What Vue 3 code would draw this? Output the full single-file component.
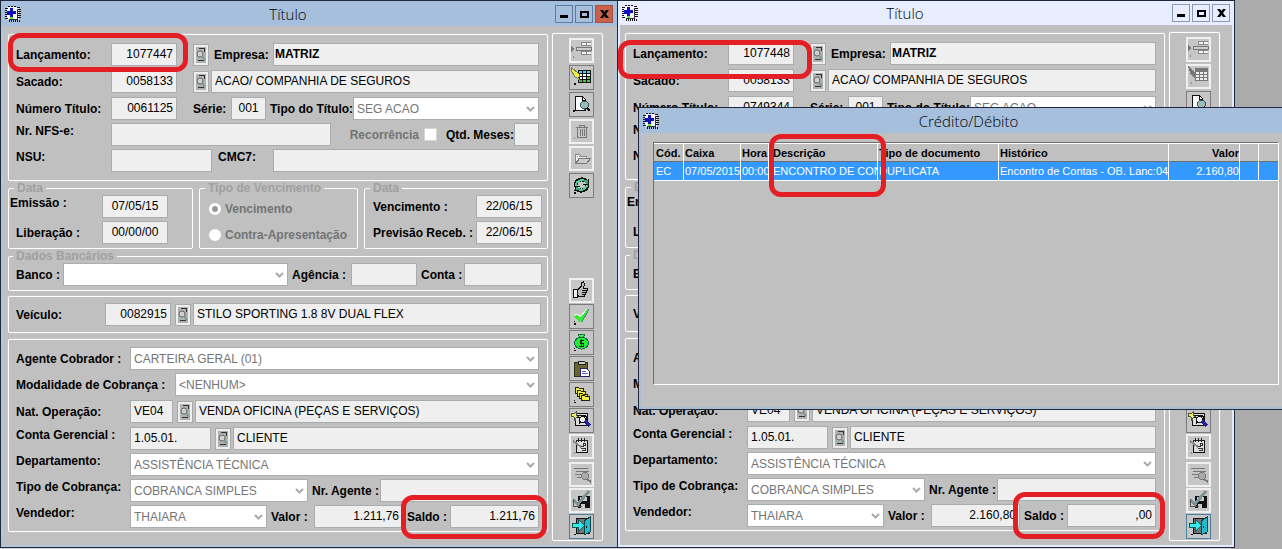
<script setup>
const windows = [
  { id: 'a', theme: 'blue', lancamento: '1077447', numero: '0061125', valor: '1.211,76', saldo: '1.211,76', editable: true },
  { id: 'b', theme: 'pale', lancamento: '1077448', numero: '0749344', valor: '2.160,80', saldo: ',00', editable: false },
]

const icons = {
  insert: '<path d="M2 8l4 3-4 3z" fill="#777"/><path d="M12 4h10v4h-10zM12 12h10v4h-10z" fill="#f4f4f4"/><path d="M12 4h10M12 7h10M12 13h10M12 16h10M12 4v4M17 4v4M17 13v3M12 13v3" stroke="#888" fill="none"/><rect x="7.500" y="9.500" width="15" height="3" fill="#ccc" stroke="#777"/><path d="M4 18h1v2h-1z" fill="#888"/>',
  edit: '<rect x="9" y="5" width="13" height="13" fill="#111"/><path d="M10 6h3v2h-3zM14 6h3v2h-3zM18 6h3v2h-3z" fill="#5cf"/><path d="M10 9h3v2h-3zM14 9h3v2h-3zM18 9h3v2h-3zM10 12h3v2h-3zM14 12h3v2h-3z" fill="#fff"/><path d="M18 12h3v2h-3zM10 15h3v2h-3zM14 15h3v2h-3zM18 15h3v2h-3z" fill="#4c4"/><path d="M2 2l8 7 1 6-5-3-4-7z" fill="#ee4" stroke="#776"/><path d="M8 12l3 3v-3z" fill="#111"/><rect x="5" y="18" width="2" height="2" fill="#111"/>',
  editOff: '<rect x="9" y="4" width="13" height="13" fill="#777"/><path d="M10 8h3v2h-3zM14 8h3v2h-3zM18 8h3v2h-3zM10 11h3v2h-3zM14 11h3v2h-3zM18 11h3v2h-3zM10 14h3v2h-3zM14 14h3v2h-3zM18 14h3v2h-3z" fill="#eee"/><path d="M2 2l7 7 1 6-5-4z" fill="#777"/><rect x="5" y="18" width="1" height="2" fill="#888"/>',
  preview: '<path d="M6.500 4.500h7l3 3v11h-10z" fill="#fff" stroke="#111"/><path d="M13.500 4.500v4h3" fill="none" stroke="#111"/><circle cx="15.500" cy="13" r="4" fill="#9bb" stroke="#355"/><path d="M18 16l3 3" stroke="#111" stroke-width="2"/><path d="M4 18h2v2h-2z" fill="#111"/>',
  trash: '<path d="M7 8.500h12M10.500 8v-2h5v2M8.500 9v9.500h9v-9.500M11.500 10v7M13.500 10v7M15.500 10v7" fill="none" stroke="#777"/><path d="M5 18h1v2h-1z" fill="#999"/>',
  folder: '<path d="M6.500 17v-9h4l1 2h6v3" fill="#eee" stroke="#888"/><path d="M6.500 17.500l4-5h11l-4 5z" fill="#ccc" stroke="#777"/><path d="M8 10h1v1h-1zM10 10h1v1h-1zM9 12h1v1h-1z" fill="#999"/>',
  refresh: '<path d="M7 13a6 5 0 0 1 10-5M18 11a6 5 0 0 1-10 5" fill="none" stroke="#111" stroke-width="4"/><path d="M7 13a6 5 0 0 1 9-5M18 11a6 5 0 0 1-9 5" fill="none" stroke="#5c9" stroke-width="2"/><path d="M14 7h5v4h-2zM11 17h-5v-4h2z" fill="#3a7"/><path d="M19 6v5h-5M6 18v-5h5" stroke="#111" fill="none"/><path d="M5 17h1v1h-1zM5 19h2v2h-2z" fill="#111"/>',
  thumb: '<path d="M4.500 11.500h4v8h-4z" fill="#eee" stroke="#111"/><path d="M8.500 12l4-4v-3l2-1 1 2-1 4h4v2.500h-1v2h-1v2h-1v2h-5l-2-1z" fill="#bbb" stroke="#111"/><path d="M13 12.500h5M13 14.500h4M13 16.500h3" stroke="#111"/>',
  check: '<path d="M5 12l4-1 2 3 7-9h2l-7 13h-3z" fill="#3e3"/><path d="M13 18l7-13" stroke="#588" fill="none"/><path d="M5 11l4-1 2 3 7-8" stroke="#eee" fill="none"/><path d="M5 17h1v1h-1zM5 19h2v2h-2z" fill="#111"/>',
  money: '<path d="M9.500 4.500h6l-1 3h-4z" fill="#4e4" stroke="#264"/><ellipse cx="12.500" cy="13" rx="7" ry="6" fill="#2e3" stroke="#164"/><path d="M15 10h-4v3h3v3h-4M12.500 9v8" stroke="#121" fill="none"/><path d="M5 18h1v1h-1zM5 20h2v1h-2z" fill="#111"/>',
  paste: '<path d="M5.500 6.500h13v14h-13z" fill="#663" stroke="#331"/><path d="M9 8v-2l2-1h3l2 1v2z" fill="#ccb" stroke="#222"/><path d="M11.500 12.500h6l3 3v5h-9z" fill="#fff" stroke="#226"/><path d="M13 15h4M13 17.500h6" stroke="#55b"/>',
  layers: '<g fill="#ee4" stroke="#221"><path d="M6.500 5.500h3l1 1h4v5h-8z"/><path d="M8.500 8.500h3l1 1h4v5h-8z"/><path d="M10.500 11.500h3l1 1h4v4h-8z"/><path d="M12.500 13.500h3l1 1h4v4h-8z"/></g><path d="M5 18h1v1h-1zM5 20h2v1h-2z" fill="#111"/>',
  inspect: '<path d="M6.500 5.500h12v12h-12z" fill="#ddd" stroke="#111"/><path d="M3 5l2 1 2-2v3l3 1-3 2-1 3-1-4-3-1z" fill="#ee6" stroke="#554"/><path d="M8 7h9M8 9h2v7M14 8h3v8" stroke="#111" fill="none"/><circle cx="13.500" cy="11.500" r="3" fill="#eee" stroke="#111"/><path d="M16 13l5 5" stroke="#229" stroke-width="3"/>',
  note: '<path d="M7.500 6.500h11v12h-11z" fill="#ddd" stroke="#111"/><path d="M7 6.500h12M9 4v4M12 4v4M15 4v4" stroke="#222"/><path d="M14 9h2v2h-2zM12 12h3M12 14h4v2h-3" stroke="#333" fill="none"/><path d="M4 7l8 6" stroke="#888" stroke-width="2"/><path d="M5 18h1v2h-1z" fill="#888"/>',
  search: '<path d="M5 6.500h14M7 9.500h13M6 12.500h10M8 15.500h7" stroke="#777"/><circle cx="16" cy="14" r="3.500" fill="#aaa" stroke="#777"/><path d="M18 17l4 3" stroke="#777" stroke-width="2"/>',
  save: '<path d="M9 8h12v12h-12z" fill="#111"/><path d="M11 9h7v4h-7zM12 16h6v4h-6z" fill="#ccc"/><path d="M16 16h2v4h-2z" fill="#111"/><path d="M4 12l5 4 11-13" fill="none" stroke="#7a9494" stroke-width="3"/><path d="M4.500 11v7h8" stroke="#555" fill="none"/>',
  exit: '<path d="M7.500 4.500h13v15h-13z" fill="#777" stroke="#111"/><path d="M15 7l6-4v15l-6 3z" fill="#2bc" stroke="#144"/><path d="M3.500 9.500h6v-4l6 6-6 6v-4h-6z" fill="#3ee" stroke="#155"/><path d="M17 12h1v2h-1z" fill="#111"/><path d="M5 20h2v1h-2z" fill="#111"/>',
}

const topTools = (w) => [
  { icon: 'insert', label: 'Incluir', off: true },
  { icon: w.editable ? 'edit' : 'editOff', label: 'Alterar', off: !w.editable },
  { icon: 'preview', label: 'Visualizar' },
  { icon: 'trash', label: 'Excluir', off: true },
  { icon: 'folder', label: 'Abrir', off: true },
  { icon: 'refresh', label: 'Atualizar' },
]
const midTools = [
  { icon: 'thumb', label: 'Aprovar', off: true },
  { icon: 'check', label: 'Confirmar' },
  { icon: 'money', label: 'Baixar' },
  { icon: 'paste', label: 'Colar' },
  { icon: 'layers', label: 'Parcelas' },
  { icon: 'inspect', label: 'Consultar' },
  { icon: 'note', label: 'Anotar', off: true },
]
const endTools = [
  { icon: 'search', label: 'Localizar', off: true },
  { icon: 'save', label: 'Gravar', off: true },
  { icon: 'exit', label: 'Sair', focus: true },
]

const appIcon = '<path d="M2 1h12v13h-12z" fill="#f4f4fa"/><path d="M0 2h3v1h-3zM0 4h2v1h-2zM0 6h2v1h-2zM0 8h2v1h-2zM0 10h2v1h-2zM0 12h3v1h-3zM3 0h2v1h-2zM6 0h2v1h-2zM9 0h2v1h-2zM12 1h3v1h-3zM13 3h3v1h-3zM13 5h3v1h-3zM13 7h3v1h-3zM13 9h3v1h-3zM13 11h3v1h-3zM4 14h1v2h-1zM6 14h1v2h-1zM8 14h1v2h-1zM10 14h1v2h-1zM12 14h1v2h-1zM14 14h1v2h-1z" fill="#111"/><path d="M4 13h9v1h-9zM12 3h1v10h-1z" fill="#333"/><path d="M5 2h3v3h3v3h-3v3h-3v-2h-3v-4h3z" fill="#11b"/><path d="M5 11h3v2h-3z" fill="#5e3"/>'
const lookupIcon = '<rect x="2" y="2" width="10" height="16" fill="#b0b0b0"/><circle cx="6" cy="9" r="3" fill="#d0d0d0" stroke="#666"/><path d="M5 3.500h6M10.500 3v4M4 15.500h6" stroke="#333" fill="none"/><path d="M8 11l3 4" stroke="#7a9a90" stroke-width="2"/>'
</script>

<template>
  <div class="desktop">
    <section v-for="w in windows" :key="w.id" class="window" :class="w.theme">
      <header class="titlebar">
        <svg class="app-icon" viewBox="0 0 16 16" shape-rendering="crispEdges" v-html="appIcon"></svg>
        <h1>Título</h1>
        <div class="win-buttons">
          <button type="button" aria-label="Minimizar"><svg viewBox="0 0 16 16"><path d="M4 9h8v3h-8z" /></svg></button>
          <button type="button" aria-label="Maximizar"><svg viewBox="0 0 16 16"><path d="M4 5h9v7h-9zM6 7v3h5v-3z" fill-rule="evenodd" /></svg></button>
          <button type="button" class="close" aria-label="Fechar"><svg viewBox="0 0 16 16"><path d="M4 4h3l1.500 2L10 4h3L10 8l3 4h-3L8.500 10 7 12H4l3-4z" /></svg></button>
        </div>
      </header>

      <div class="body">
        <form class="main" @submit.prevent>
          <div class="panel panel-title">
            <div class="row">
              <label class="w95" :for="w.id + 'lan'">Lançamento:</label>
              <input :id="w.id + 'lan'" class="num w66" :value="w.lancamento" />
              <button type="button" class="lookup far" aria-label="Procurar lançamento"><svg viewBox="0 0 14 20" v-html="lookupIcon"></svg></button>
              <label class="w59 after" :for="w.id + 'emp'">Empresa:</label>
              <input :id="w.id + 'emp'" class="grow strong" value="MATRIZ" />
            </div>
            <div class="row gap4">
              <label class="w95" :for="w.id + 'sac'">Sacado:</label>
              <input :id="w.id + 'sac'" class="num w66" value="0058133" />
              <button type="button" class="lookup far" aria-label="Procurar sacado"><svg viewBox="0 0 14 20" v-html="lookupIcon"></svg></button>
              <input class="grow" aria-label="Nome do sacado" value="ACAO/ COMPANHIA DE SEGUROS" />
            </div>
            <div class="row gap4">
              <label class="w95" :for="w.id + 'num'">Número Título:</label>
              <input :id="w.id + 'num'" class="num w66" :value="w.numero" />
              <label class="w38 serie" :for="w.id + 'ser'">Série:</label>
              <input :id="w.id + 'ser'" class="mid w35" value="001" />
              <label class="w83 near" :for="w.id + 'tip'">Tipo do Título:</label>
              <span class="combo grow">
                <select :id="w.id + 'tip'"><option>SEG ACAO</option></select>
                <svg viewBox="0 0 9 6"><path d="M1 1l3.500 3.500L8 1" /></svg>
              </span>
            </div>
            <div class="row">
              <label class="w95 high" :for="w.id + 'nfs'">Nr. NFS-e:</label>
              <input :id="w.id + 'nfs'" class="grow" />
              <label class="dim recor" :for="w.id + 'rec'">Recorrência</label>
              <input :id="w.id + 'rec'" type="checkbox" />
              <label class="w68" :for="w.id + 'qtd'">Qtd. Meses:</label>
              <input :id="w.id + 'qtd'" class="w25" />
            </div>
            <div class="row">
              <label class="w95 high" :for="w.id + 'nsu'">NSU:</label>
              <input :id="w.id + 'nsu'" class="w101" />
              <label class="w55 cmc high" :for="w.id + 'cmc'">CMC7:</label>
              <input :id="w.id + 'cmc'" class="grow" />
            </div>
          </div>

          <div class="dates">
            <fieldset class="issue">
              <legend>Data</legend>
              <div class="row">
                <label class="high" :for="w.id + 'emi'">Emissão :</label>
                <input :id="w.id + 'emi'" class="mid w66" value="07/05/15" />
              </div>
              <div class="row">
                <label class="inset" :for="w.id + 'lib'">Liberação :</label>
                <input :id="w.id + 'lib'" class="mid w66" value="00/00/00" />
              </div>
            </fieldset>
            <fieldset class="kinds">
              <legend>Tipo de Vencimento</legend>
              <div class="row">
                <input :id="w.id + 'r1'" type="radio" :name="w.id + 'kind'" checked />
                <label class="dim" :for="w.id + 'r1'">Vencimento</label>
              </div>
              <div class="row">
                <input :id="w.id + 'r2'" type="radio" :name="w.id + 'kind'" />
                <label class="dim" :for="w.id + 'r2'">Contra-Apresentação</label>
              </div>
            </fieldset>
            <fieldset>
              <legend>Data</legend>
              <div class="row">
                <label class="w103" :for="w.id + 'ven'">Vencimento :</label>
                <input :id="w.id + 'ven'" class="mid w66" value="22/06/15" />
              </div>
              <div class="row">
                <label class="w103" :for="w.id + 'pre'">Previsão Receb. :</label>
                <input :id="w.id + 'pre'" class="mid w66" value="22/06/15" />
              </div>
            </fieldset>
          </div>

          <fieldset class="bank">
            <legend>Dados Bancários</legend>
            <div class="row">
              <label class="w47" :for="w.id + 'ban'">Banco :</label>
              <span class="combo grow">
                <select :id="w.id + 'ban'"><option></option></select>
                <svg viewBox="0 0 9 6"><path d="M1 1l3.500 3.500L8 1" /></svg>
              </span>
              <label class="w59 near" :for="w.id + 'age'">Agência :</label>
              <input :id="w.id + 'age'" class="w66" />
              <label class="w43 near" :for="w.id + 'con'">Conta :</label>
              <input :id="w.id + 'con'" class="w78" />
            </div>
          </fieldset>

          <div class="panel vehicle">
            <div class="row">
              <label class="w89" :for="w.id + 'vei'">Veículo:</label>
              <input :id="w.id + 'vei'" class="num w66" value="0082915" />
              <button type="button" class="lookup" aria-label="Procurar veículo"><svg viewBox="0 0 14 20" v-html="lookupIcon"></svg></button>
              <input class="grow" aria-label="Descrição do veículo" value="STILO SPORTING 1.8 8V DUAL FLEX" />
            </div>
          </div>

          <div class="panel billing">
            <div class="row">
              <label class="w114" :for="w.id + 'agc'">Agente Cobrador :</label>
              <span class="combo grow">
                <select :id="w.id + 'agc'"><option>CARTEIRA GERAL (01)</option></select>
                <svg viewBox="0 0 9 6"><path d="M1 1l3.500 3.500L8 1" /></svg>
              </span>
            </div>
            <div class="row">
              <label class="w159" :for="w.id + 'mod'">Modalidade de Cobrança :</label>
              <span class="combo grow">
                <select :id="w.id + 'mod'"><option>&lt;NENHUM&gt;</option></select>
                <svg viewBox="0 0 9 6"><path d="M1 1l3.500 3.500L8 1" /></svg>
              </span>
            </div>
            <div class="row gap4">
              <label class="w114" :for="w.id + 'nat'">Nat. Operação:</label>
              <input :id="w.id + 'nat'" class="w43" value="VE04" />
              <button type="button" class="lookup" aria-label="Procurar natureza"><svg viewBox="0 0 14 20" v-html="lookupIcon"></svg></button>
              <input class="grow" aria-label="Descrição da natureza" value="VENDA OFICINA (PEÇAS E SERVIÇOS)" />
            </div>
            <div class="row gap4">
              <label class="w114 high" :for="w.id + 'ger'">Conta Gerencial :</label>
              <input :id="w.id + 'ger'" class="w81" value="1.05.01." />
              <button type="button" class="lookup" aria-label="Procurar conta"><svg viewBox="0 0 14 20" v-html="lookupIcon"></svg></button>
              <input class="grow" aria-label="Descrição da conta" value="CLIENTE" />
            </div>
            <div class="row">
              <label class="w114 high" :for="w.id + 'dep'">Departamento:</label>
              <span class="combo grow">
                <select :id="w.id + 'dep'"><option>ASSISTÊNCIA TÉCNICA</option></select>
                <svg viewBox="0 0 9 6"><path d="M1 1l3.500 3.500L8 1" /></svg>
              </span>
            </div>
            <div class="row">
              <label class="w114 high" :for="w.id + 'tco'">Tipo de Cobrança:</label>
              <span class="combo grow">
                <select :id="w.id + 'tco'"><option>COBRANCA SIMPLES</option></select>
                <svg viewBox="0 0 9 6"><path d="M1 1l3.500 3.500L8 1" /></svg>
              </span>
              <label class="w68 near" :for="w.id + 'nag'">Nr. Agente :</label>
              <input :id="w.id + 'nag'" class="w159" />
            </div>
            <div class="row">
              <label class="w114 high" :for="w.id + 'vdd'">Vendedor:</label>
              <span class="combo grow">
                <select :id="w.id + 'vdd'"><option>THAIARA</option></select>
                <svg viewBox="0 0 9 6"><path d="M1 1l3.500 3.500L8 1" /></svg>
              </span>
              <label class="w43 near" :for="w.id + 'val'">Valor :</label>
              <input :id="w.id + 'val'" class="num w89" :value="w.valor" />
              <label class="w43 near" :for="w.id + 'sal'">Saldo :</label>
              <input :id="w.id + 'sal'" class="num w89" :value="w.saldo" />
            </div>
          </div>
        </form>

        <nav class="tools" aria-label="Ações">
          <div class="tool-set loose">
            <button v-for="t in topTools(w)" :key="t.icon" type="button" :class="{ off: t.off }" :aria-label="t.label">
              <svg viewBox="0 0 25 25" shape-rendering="crispEdges" v-html="icons[t.icon]"></svg>
            </button>
          </div>
          <div class="tool-set mid-set">
            <button v-for="t in midTools" :key="t.icon" type="button" :class="{ off: t.off }" :aria-label="t.label">
              <svg viewBox="0 0 25 25" shape-rendering="crispEdges" v-html="icons[t.icon]"></svg>
            </button>
          </div>
          <div class="tool-set end-set">
            <button v-for="t in endTools" :key="t.icon" type="button" :class="{ off: t.off, focus: t.focus }" :aria-label="t.label">
              <svg viewBox="0 0 25 25" shape-rendering="crispEdges" v-html="icons[t.icon]"></svg>
            </button>
          </div>
        </nav>
      </div>

      <span class="mark mark-launch"></span>
      <span class="mark mark-balance"></span>
    </section>

    <section class="dialog">
      <header class="titlebar">
        <svg class="app-icon" viewBox="0 0 16 16" shape-rendering="crispEdges" v-html="appIcon"></svg>
        <h1>Crédito/Débito</h1>
      </header>
      <div class="grid-box">
        <table>
          <colgroup>
            <col class="c1" /><col class="c2" /><col class="c3" /><col class="c4" /><col class="c5" /><col /><col class="c7" /><col class="c8" /><col class="c8" />
          </colgroup>
          <thead>
            <tr>
              <th>Cód.</th><th>Caixa</th><th>Hora</th><th>Descrição</th><th>Tipo de documento</th><th>Histórico</th><th class="right">Valor</th><th></th><th></th>
            </tr>
          </thead>
          <tbody>
            <tr>
              <td>EC</td><td>07/05/2015</td><td>00:00</td><td>ENCONTRO DE CONTA</td><td>DUPLICATA</td><td>Encontro de Contas - OB. Lanc:047</td><td class="right">2.160,80</td><td></td><td></td>
            </tr>
          </tbody>
        </table>
      </div>
      <span class="mark mark-column"></span>
    </section>
  </div>
</template>

<style>
body {
  margin: 0;
  background: #d4d4d4;
}
</style>

<style scoped>
.desktop {
  position: relative;
  display: grid;
  grid-template-columns: 617fr 618fr 47fr;
  min-height: 100vh;
  padding-bottom: 1px;
  box-sizing: border-box;
  background: linear-gradient(to right, #d4d4d4 96%, #ababab 96%);
  font: 12px/16px "Liberation Sans", Arial, sans-serif;
  color: #000;
}
.desktop *,
.desktop *::before {
  box-sizing: border-box;
}

/* windows */
.window {
  position: relative;
  display: flex;
  flex-direction: column;
  min-width: 0;
  border: 1px solid #20283a;
  border-right: 0;
  background: #c0c0c0;
}
.window.pale {
  border-right: 1px solid #20283a;
}
.titlebar {
  display: flex;
  align-items: center;
  height: 25px;
  padding: 0 4px;
  background: #a6bfdc;
}
.pale .titlebar {
  height: 24px;
  background: #e8eeff;
}
.titlebar h1 {
  flex: 1;
  margin: 0;
  text-align: center;
  font: 300 15px/20px "Open Sans", "Noto Sans", sans-serif;
}
.app-icon {
  width: 16px;
  height: 16px;
}
.win-buttons {
  display: flex;
  gap: 2px;
}
.win-buttons button {
  display: flex;
  width: 18px;
  height: 18px;
  padding: 0;
  border: 1px solid #5f7ba3;
  background: transparent;
}
.win-buttons svg {
  width: 16px;
  height: 16px;
}
.pale .win-buttons button {
  border-color: #8a97b5;
}
.blue .win-buttons .close {
  border-color: #a8503f;
  background: #c9604c;
}
.body {
  flex: 1;
  display: flex;
  gap: 4px;
  padding: 7px 12px 4px 5px;
  border: solid #b4c6da;
  border-width: 0 2px 2px;
}
.pale .body {
  border-color: #e6ebfb;
}
.main {
  flex: 1;
  min-width: 0;
  padding-top: 1px;
}

/* panels */
.panel,
fieldset {
  min-width: 0;
  margin: 0;
  border: 1px solid #fff;
  border-radius: 2px;
  box-shadow: 0 0 1px #fff;
}
fieldset {
  padding: 0 6px 4px 8px;
  box-shadow: none;
}
legend {
  margin-left: -3px;
  padding: 0 3px;
  line-height: 14px;
  font-weight: 700;
  color: #a0a0a0;
}
.panel-title {
  padding: 8px 8px 8px 7px;
}
.dates {
  display: grid;
  grid-template-columns: 185fr 159fr 184fr;
  gap: 6px;
}
.issue {
  padding: 0 24px 4px 1px;
}
.issue legend {
  margin-left: 4px;
}
.issue .row {
  justify-content: space-between;
}
.issue .inset {
  margin-left: 6px;
}
.kinds {
  padding: 2px 6px 0 8px;
}
.bank {
  padding: 0 5px 4px 7px;
}
.vehicle {
  margin-top: 5px;
  padding: 6px 6px 6px 7px;
}
.billing {
  margin-top: 6px;
  padding: 7px 8px 3px 7px;
}

/* rows */
.row {
  display: flex;
  align-items: center;
  height: 23px;
}
.row + .row {
  margin-top: 3px;
}
.row + .row.gap4 {
  margin-top: 4px;
}
label {
  flex: none;
  font-weight: 700;
  white-space: nowrap;
}
label.high {
  align-self: flex-start;
}
.dim {
  color: #747474;
}
input:not([type]) {
  flex: none;
  min-width: 0;
  height: 23px;
  padding: 0 3px 1px;
  border: 1px solid #a9adad;
  border-radius: 0;
  background: #efefef;
  font: inherit;
  color: #000;
}
input.num {
  text-align: right;
}
input.mid {
  text-align: center;
}
input.strong {
  padding-left: 1px;
  font-weight: 700;
}
.row .grow {
  flex: 1;
}
.combo {
  display: grid;
  align-items: center;
  min-width: 0;
}
.combo select,
.combo svg {
  grid-area: 1 / 1;
}
.combo select {
  width: 100%;
  height: 23px;
  padding: 0 3px;
  appearance: none;
  border: 1px solid #a9adad;
  border-radius: 0;
  background: #fff;
  font: inherit;
  color: #757575;
}
.combo svg {
  justify-self: end;
  width: 9px;
  height: 6px;
  margin-right: 4px;
  fill: none;
  stroke: #aaa;
  stroke-width: 2;
  pointer-events: none;
}
.lookup {
  flex: none;
  display: flex;
  width: 16px;
  height: 22px;
  margin: 0 2px 0 4px;
  padding: 0;
  border: 1px solid #a9a9a9;
  background: #ededed;
}
.lookup.far {
  margin-left: 16px;
}
.lookup svg {
  width: 14px;
  height: 20px;
}
.after {
  margin-left: 3px;
}
.serie {
  margin-left: 16px;
}
.near {
  margin-left: 4px;
}
.recor {
  margin-left: 19px;
}
.cmc {
  margin-left: 6px;
}
input[type="checkbox"] {
  width: 13px;
  height: 13px;
  margin: 0 9px 0 5px;
  appearance: none;
  border: 1px solid #d6d6d6;
  background: #fff;
}
input[type="radio"] {
  width: 12px;
  height: 12px;
  margin: 0 4px 0 1px;
  appearance: none;
  border: 3px solid #fff;
  border-radius: 50%;
  background: #fff;
}
input[type="radio"]:checked {
  background: #999;
}
.w25 { width: 25px; }
.w35 { width: 35px; }
.w38 { width: 38px; }
.w43 { width: 43px; }
.w47 { width: 47px; }
.w55 { width: 55px; }
.w59 { width: 59px; }
.w66 { width: 66px; }
.w68 { width: 68px; }
.w78 { width: 78px; }
.w81 { width: 81px; }
.w83 { width: 83px; }
.w89 { width: 89px; }
.w95 { width: 95px; }
.w101 { width: 101px; }
.w103 { width: 103px; }
.w114 { width: 114px; }
.w159 { width: 159px; }

/* toolbar */
.tools {
  flex: none;
  display: flex;
  flex-direction: column;
  width: 51px;
  padding: 4px 0 1px 16px;
  border: 1px solid #fff;
  border-radius: 2px;
  box-shadow: 0 0 1px #fff;
}
.tool-set {
  display: flex;
  flex-direction: column;
  gap: 1px;
}
.tool-set.loose {
  gap: 2px;
}
.mid-set {
  margin-top: auto;
}
.end-set {
  margin-top: 3px;
}
.tool-set button {
  display: grid;
  place-items: center;
  width: 25px;
  height: 25px;
  padding: 0;
  border: 1px solid #7c7c7c;
  background: #c6c6c6;
}
.tool-set button.off {
  border: 2px solid #f0f0f0;
}
.tool-set button.focus {
  border: 1px solid #4b7fa0;
}
.tool-set svg {
  width: 25px;
  height: 25px;
  margin: -2px;
}

/* red outlines over the fields */
.mark {
  position: absolute;
  border: 5px solid #e31e24;
  border-radius: 12px;
  pointer-events: none;
}
.mark-launch {
  top: 32px;
  left: 7px;
  width: 180px;
  height: 39px;
}
.pale .mark-launch {
  top: 39px;
  left: 0;
  width: 194px;
  height: 39px;
}
.mark-balance {
  right: 70px;
  bottom: 8px;
  width: 146px;
  height: 44px;
}
.pale .mark-balance {
  right: 69px;
  width: 152px;
  height: 47px;
}
.mark-column {
  top: 26px;
  left: 130px;
  width: 117px;
  height: 63px;
}

/* dialog */
.dialog {
  position: absolute;
  top: 107px;
  left: 638px;
  right: 0;
  height: 303px;
  display: flex;
  flex-direction: column;
  border: 1px solid #20283a;
  border-right: 0;
  background: #c0c0c0;
  box-shadow: inset 2px -2px 0 #a9bdd3;
}
.grid-box {
  flex: 1;
  margin: 9px 3px 24px 14px;
  border: 1px solid;
  border-color: #6e6e6e #fff #fff #6e6e6e;
}
table {
  width: 100%;
  table-layout: fixed;
  border-collapse: separate;
  border-spacing: 0;
  font-size: 11px;
}
.c1 { width: 30px; }
.c2 { width: 57px; }
.c3 { width: 28px; }
.c4 { width: 109px; }
.c5 { width: 121px; }
.c7 { width: 71px; }
.c8 { width: 19px; }
th,
td {
  height: 19px;
  padding: 0 0 0 1px;
  overflow: hidden;
  white-space: nowrap;
  text-align: left;
  line-height: 17px;
}
th {
  border: solid #fff;
  border-width: 1px 1px 0 0;
  box-shadow: inset 0 -1px 0 #6e6e6e;
}
th:last-child,
td:last-child {
  border-right: 0;
}
td {
  border: solid #fff;
  border-width: 0 1px 1px 0;
  background: #39f;
  color: #fff;
}
td:first-child,
th:first-child {
  padding-left: 2px;
}
th:nth-child(4),
td:nth-child(4) {
  padding-left: 4px;
}
.right {
  text-align: right;
}
</style>
